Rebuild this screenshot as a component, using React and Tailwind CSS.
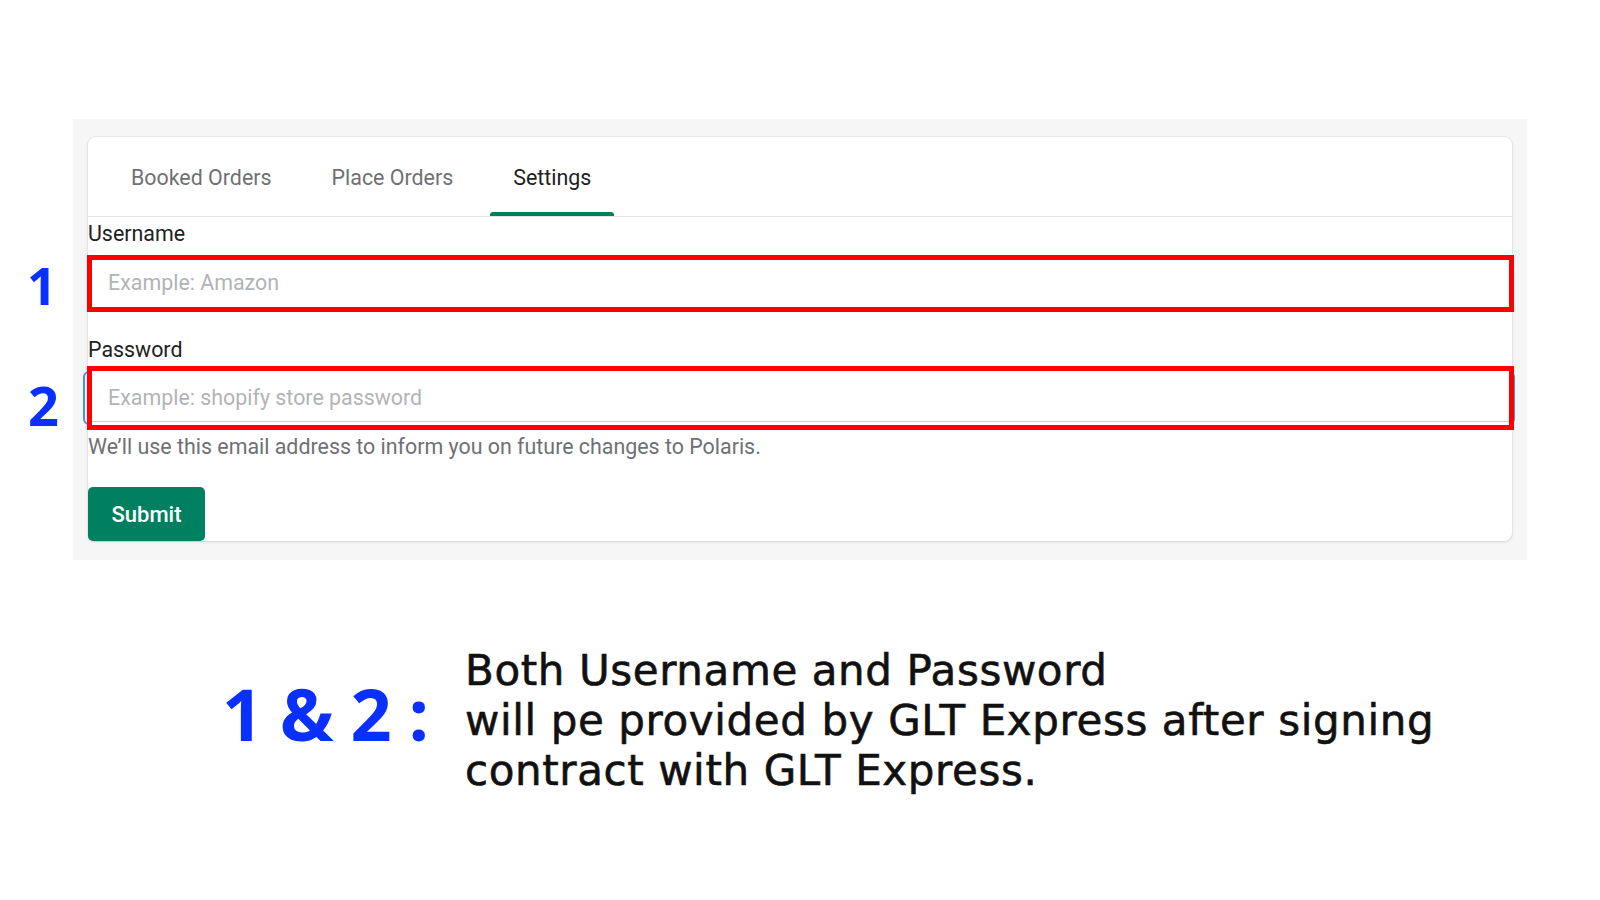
import React from 'react';

const tabs = ['Booked Orders', 'Place Orders', 'Settings'];

function Tab({ label, active }) {
  return (
    <div className="flex flex-col h-full">
      <div
        className={
          'flex-1 flex items-center px-[23px] pt-[7px] text-[21.4px] ' +
          (active ? 'text-[#202223]' : 'text-[#6d7175]')
        }
      >
        {label}
      </div>
      <div className={'h-[4px] rounded-t-[3px] ' + (active ? 'bg-[#008060]' : 'bg-transparent')} />
    </div>
  );
}

export default function App() {
  return (
    <div className="relative w-[1600px] h-[900px] bg-white font-['Roboto',sans-serif]">
      {/* annotation numbers */}
      <div className="absolute left-[27px] top-[259px] text-[52px] leading-[52px] font-bold text-[#0a30ff] font-['Open_Sans',sans-serif]">
        1
      </div>
      <div className="absolute left-[28px] top-[378px] text-[54px] leading-[54px] font-bold text-[#0a30ff] font-['Open_Sans',sans-serif]">
        2
      </div>

      <div className="pt-[119px] pl-[73px]">
        <div className="w-[1454px] bg-[#f6f6f7] pt-[18px] pb-[19px] px-[15px]">
          <div className="bg-white rounded-lg shadow-[0_0_0_1px_rgba(63,63,68,0.05),0_1px_3px_0_rgba(63,63,68,0.15)]">
            <div className="h-[80px] flex pl-[20px] gap-[14px] border-b border-[#e1e3e5]">
              {tabs.map((t) => (
                <Tab key={t} label={t} active={t === 'Settings'} />
              ))}
            </div>

            <div className="flex flex-col">
              <div className="mt-[5px] text-[21.4px] leading-[24px] text-[#202223]">Username</div>
              <div className="mt-[9px] -ml-[1px] w-[1427px] h-[57px] border-[5px] border-[#ff0000] flex items-center pl-[16px]">
                <input
                  className="w-full bg-transparent outline-none text-[21.4px] text-[#202223] placeholder:text-[#b1b4b7]"
                  placeholder="Example: Amazon"
                />
              </div>

              <div className="mt-[26px] text-[21.4px] leading-[24px] text-[#202223]">Password</div>
              <div className="relative mt-[4px] -ml-[1px] w-[1427px] h-[64px]">
                <div className="absolute -left-[4px] -right-[1px] top-[5px] bottom-[5px] rounded-[6px] border-[2px] border-[#458fff]" />
                <div className="absolute inset-0 bg-white border-[5px] border-[#ff0000] flex items-center pl-[16px]">
                  <input
                    className="w-full bg-transparent outline-none text-[21.4px] text-[#202223] placeholder:text-[#b1b4b7]"
                    placeholder="Example: shopify store password"
                  />
                  <div className="absolute left-0 right-0 bottom-[3px] h-[1px] bg-[#c9cccf]" />
                </div>
              </div>

              <div className="mt-[5px] text-[21.4px] leading-[24px] text-[#6d7175]">
                We’ll use this email address to inform you on future changes to Polaris.
              </div>

              <div className="mt-[28px]">
                <button className="w-[117px] h-[54px] rounded-[5px] bg-[#008060] text-white text-[22px] font-medium shadow-[0_1px_0_rgba(0,0,0,0.05)]">
                  Submit
                </button>
              </div>
            </div>
          </div>
        </div>
      </div>

      <div className="mt-[86px] pl-[222px] flex items-start">
        <div className="mt-[31px] text-[72px] leading-[72px] font-bold tracking-[-1px] text-[#0a30ff] whitespace-pre font-['Open_Sans',sans-serif]">
          1 &amp; 2 :
        </div>
        <div className="ml-[37px] text-[42px] leading-[50px] tracking-[0.6px] text-[#111111] font-['DejaVu_Sans',sans-serif] [-webkit-text-stroke:0.6px_#111111]">
          <div>Both Username and Password</div>
          <div>will pe provided by GLT Express after signing</div>
          <div>contract with GLT Express.</div>
        </div>
      </div>
    </div>
  );
}
